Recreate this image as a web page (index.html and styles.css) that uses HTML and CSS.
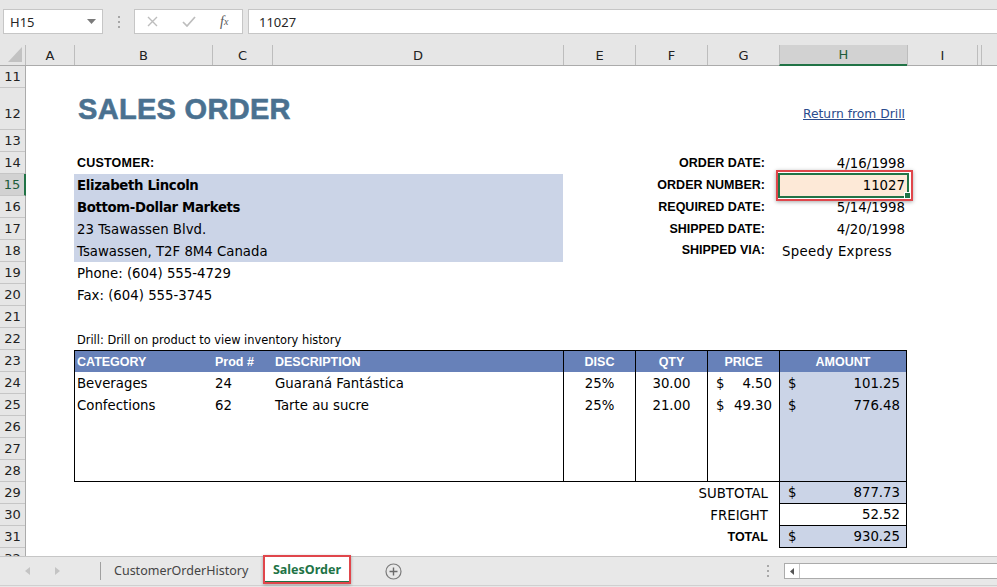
FILE: index.html
```html
<!DOCTYPE html>
<html lang="en">
<head>
<meta charset="utf-8">
<title>SalesOrder</title>
<link rel="stylesheet" href="styles.css">
</head>
<body>
<div class="app">
  <header class="fbar">
    <div class="namebox">
      <span class="ref">H15</span>
      <svg class="dd" width="9" height="5" viewBox="0 0 9 5"><path d="M0 0h9L4.5 5z" fill="#7a7a7a"/></svg>
    </div>
    <div class="grip"><i></i><i></i><i></i></div>
    <div class="fbtns">
      <span class="fbtn"><svg width="11" height="11" viewBox="0 0 11 11"><path d="M1 1l9 9M10 1l-9 9" stroke="#bdbdbd" stroke-width="1.4"/></svg></span>
      <span class="fbtn"><svg width="14" height="11" viewBox="0 0 14 11"><path d="M1 6l4 4 8-9" fill="none" stroke="#bdbdbd" stroke-width="1.7"/></svg></span>
      <span class="fbtn fx">f<sub>x</sub></span>
    </div>
    <div class="finput">11027</div>
  </header>

  <div class="colhdr">
    <div class="corner"><svg width="25" height="20" viewBox="0 0 25 20"><path d="M22 2v15H8z" fill="#c2c2c2"/></svg></div>
    <div class="ch">A</div>
    <div class="ch">B</div>
    <div class="ch">C</div>
    <div class="ch">D</div>
    <div class="ch">E</div>
    <div class="ch">F</div>
    <div class="ch">G</div>
    <div class="ch sel">H</div>
    <div class="ch">I</div>
    <div class="ch"></div>
    <div class="ch"></div>
  </div>

  <div class="body">
    <div class="rowhdr">
      <div class="rh">11</div>
      <div class="rh tall">12</div>
      <div class="rh">13</div>
      <div class="rh">14</div>
      <div class="rh sel">15</div>
      <div class="rh">16</div>
      <div class="rh">17</div>
      <div class="rh">18</div>
      <div class="rh">19</div>
      <div class="rh">20</div>
      <div class="rh">21</div>
      <div class="rh">22</div>
      <div class="rh">23</div>
      <div class="rh">24</div>
      <div class="rh">25</div>
      <div class="rh">26</div>
      <div class="rh">27</div>
      <div class="rh">28</div>
      <div class="rh">29</div>
      <div class="rh">30</div>
      <div class="rh">31</div>
      <div class="rh">32</div>
    </div>

    <div class="grid">
      <h1 class="title">SALES ORDER</h1>
      <a class="drill-link" href="#">Return from Drill</a>

      <div class="label cust-label">CUSTOMER:</div>
      <div class="cust-box">
        <div class="line b">Elizabeth Lincoln</div>
        <div class="line b">Bottom-Dollar Markets</div>
        <div class="line">23 Tsawassen Blvd.</div>
        <div class="line">Tsawassen, T2F 8M4 Canada</div>
      </div>
      <div class="contact">
        <div class="line">Phone: (604) 555-4729</div>
        <div class="line">Fax: (604) 555-3745</div>
      </div>

      <div class="order-info">
        <div class="oi-label">ORDER DATE:</div><div class="oi-val">4/16/1998</div>
        <div class="oi-label">ORDER NUMBER:</div><div class="oi-val active">11027<span class="handle"></span></div>
        <div class="oi-label">REQUIRED DATE:</div><div class="oi-val">5/14/1998</div>
        <div class="oi-label">SHIPPED DATE:</div><div class="oi-val">4/20/1998</div>
        <div class="oi-label via">SHIPPED VIA:</div><div class="oi-val left">Speedy Express</div>
      </div>

      <div class="drill-note">Drill: Drill on product to view inventory history</div>

      <div class="order-table">
        <div class="tcol">
          <div class="th">CATEGORY</div>
          <div class="td">Beverages</div>
          <div class="td">Confections</div>
        </div>
        <div class="tcol">
          <div class="th pad3">Prod #</div>
          <div class="td pad3">24</div>
          <div class="td pad3">62</div>
        </div>
        <div class="tcol">
          <div class="th pad3">DESCRIPTION</div>
          <div class="td pad3">Guaraná Fantástica</div>
          <div class="td pad3">Tarte au sucre</div>
        </div>
        <div class="tcol bl">
          <div class="th c">DISC</div>
          <div class="td c">25%</div>
          <div class="td c">25%</div>
        </div>
        <div class="tcol bl">
          <div class="th c">QTY</div>
          <div class="td c">30.00</div>
          <div class="td c">21.00</div>
        </div>
        <div class="tcol bl">
          <div class="th c">PRICE</div>
          <div class="td acct price"><span>$</span><span>4.50</span></div>
          <div class="td acct price"><span>$</span><span>49.30</span></div>
        </div>
        <div class="tcol bl amount">
          <div class="th c">AMOUNT</div>
          <div class="td acct"><span>$</span><span>101.25</span></div>
          <div class="td acct"><span>$</span><span>776.48</span></div>
        </div>
      </div>

      <div class="sum-label s29">SUBTOTAL</div>
      <div class="sum-label s30">FREIGHT</div>
      <div class="sum-label s31 strong">TOTAL</div>
      <div class="sum-box">
        <div class="money shade"><span>$</span><span>877.73</span></div>
        <div class="money end"><span>52.52</span></div>
        <div class="money shade"><span>$</span><span>930.25</span></div>
      </div>
    </div>
  </div>

  <footer class="tabs">
    <div class="tabnav">
      <svg class="tri" width="5" height="8" viewBox="0 0 5 8"><path d="M5 0v8L0 4z" fill="#c4c4c4"/></svg>
      <svg class="tri" width="5" height="8" viewBox="0 0 5 8"><path d="M0 0v8l5-4z" fill="#c4c4c4"/></svg>
    </div>
    <div class="tabsep"></div>
    <div class="tab">CustomerOrderHistory</div>
    <div class="tab active">SalesOrder</div>
    <div class="addtab"><svg width="17" height="17" viewBox="0 0 17 17"><circle cx="8.5" cy="8.5" r="7.5" fill="none" stroke="#7b7b7b" stroke-width="1.2"/><path d="M8.5 4.5v8M4.5 8.5h8" stroke="#6a6a6a" stroke-width="1.4"/></svg></div>
    <div class="tabspace"></div>
    <div class="vgrip"><i></i><i></i><i></i></div>
    <div class="hscroll">
      <div class="hs-btn"><svg width="4" height="7" viewBox="0 0 4 7"><path d="M4 0v7L0 3.5z" fill="#555"/></svg></div>
    </div>
  </footer>
</div>
</body>
</html>
```

FILE: styles.css
```css
* { box-sizing: border-box; margin: 0; padding: 0; }
html, body { width: 997px; height: 587px; overflow: hidden; }
body { background: #e8e8e8; font-family: "DejaVu Sans", sans-serif; color: #000; }
.app { display: flex; flex-direction: column; height: 587px; }

/* formula bar */
.fbar { flex: none; height: 45px; background: #e6e6e6; display: flex; align-items: flex-start; padding-top: 9px; font-family: "Noto Sans", sans-serif; font-size: 13px; color: #262626; }
.namebox { margin-left: 3px; width: 100px; height: 25px; background: #fff; border: 1px solid #c6c6c6; display: flex; align-items: center; justify-content: space-between; padding: 0 6px 0 6px; }
.grip { width: 31px; height: 25px; display: flex; flex-direction: column; align-items: center; justify-content: center; gap: 3px; }
.grip i { width: 2px; height: 2px; background: #a6a6a6; }
.fbtns { width: 109px; height: 25px; background: #fff; border: 1px solid #c6c6c6; display: flex; align-items: center; }
.fbtn { width: 36px; display: flex; justify-content: center; align-items: center; }
.fx { font-family: "Liberation Serif", serif; font-style: italic; font-size: 14px; color: #595959; }
.fx sub { font-size: 10px; vertical-align: -1px; }
.finput { flex: 1; margin-left: 5px; height: 25px; background: #fff; border: 1px solid #c6c6c6; border-right: 0; display: flex; align-items: center; padding-left: 10px; }

/* column headers */
.colhdr { flex: none; height: 21px; display: grid; grid-template-columns: 25px 49px 138px 60px 291px 72px 72px 72px 128px 70px 4px 1fr; background: #e6e6e6; border-bottom: 1px solid #ababab; font-size: 13px; color: #222; }
.corner { display: flex; }
.ch { border-left: 1px solid #bdbdbd; display: flex; align-items: center; justify-content: center; }
.ch.sel { background: #d2d2d2; border-bottom: 2px solid #217346; margin-bottom: -1px; color: #1e5c3a; }

/* body */
.body { flex: none; height: 490px; display: flex; overflow: hidden; background: #fff; }
.rowhdr { flex: none; width: 26px; background: #e6e6e6; border-right: 1px solid #ababab; font-size: 13px; color: #222; }
.rh { height: 22px; border-bottom: 1px solid #c6c6c6; display: flex; align-items: center; justify-content: center; }
.rh.tall { height: 42px; align-items: flex-end; padding-bottom: 8px; }
.rh.sel { background: #d2d2d2; color: #1e5c3a; border-right: 2px solid #217346; margin-right: -1px; }

.grid { flex: 1; display: grid; grid-template-columns: [A] 48px [B] 138px [C] 60px [D] 291px [E] 72px [F] 72px [G] 72px [H] 128px [I] 70px [J] 4px [K] 1fr; grid-template-rows: 22px 42px repeat(20, 22px); align-content: start; font-size: 13.3px; }

.title { grid-column: B / F; grid-row: 2; font: bold 29px/42px "Liberation Sans", sans-serif; color: #4a7190; padding-left: 4px; letter-spacing: 0.3px; -webkit-text-stroke: 0.6px #4a7190; white-space: nowrap; }
.drill-link { grid-column: H; grid-row: 2; align-self: end; justify-self: end; margin: 0 2px 9px 0; font-size: 12.3px; color: #2a4b8d; text-decoration: underline; white-space: nowrap; }

.label, .oi-label, .th, .strong { font-family: "Liberation Sans", sans-serif; font-weight: bold; font-size: 12.5px; }
.label { display: flex; align-items: center; padding-left: 3px; }
.cust-label { grid-column: B / D; grid-row: 4; letter-spacing: 0.2px; }
.cust-box { grid-column: B / E; grid-row: 5 / span 4; background: #cbd4e7; }
.contact { grid-column: B / E; grid-row: 9 / span 2; }
.line { height: 22px; display: flex; align-items: center; padding-left: 3px; white-space: nowrap; }
.b { font-weight: bold; letter-spacing: -0.35px; }

.order-info { grid-column: E / I; grid-row: 4 / span 5; display: grid; grid-template-columns: 216px 128px; grid-auto-rows: 22px; }
.oi-label { display: flex; justify-content: flex-end; align-items: center; padding-right: 14px; white-space: nowrap; }
.oi-label.via { padding-bottom: 3px; }
.oi-val { display: flex; justify-content: flex-end; align-items: center; padding-right: 2px; white-space: nowrap; }
.oi-val.left { justify-content: flex-start; padding-left: 3px; letter-spacing: 0.3px; }
.oi-val.active { background: #fde9d7; position: relative; }
.oi-val.active::before { content: ""; position: absolute; top: -1px; left: -1px; right: -2px; bottom: -2px; border: 2px solid #217346; }
.oi-val.active::after { content: ""; position: absolute; top: -4px; left: -3px; right: -6px; bottom: -5px; border: 2px solid #e0464b; box-shadow: 0 1px 4px rgba(0,0,0,0.35); }
.handle { position: absolute; right: -3px; bottom: -2px; width: 5px; height: 5px; background: #217346; box-shadow: 0 0 0 1px #fff; }

.drill-note { grid-column: B / F; grid-row: 12; font-size: 11.4px; display: flex; align-items: center; padding: 2px 0 0 3px; white-space: nowrap; }

.order-table { grid-column: B / I; grid-row: 13 / span 6; border: 1px solid #000; display: grid; grid-template-columns: 137px 60px 291px 72px 72px 72px 127px; }
.tcol { display: flex; flex-direction: column; }
.tcol.bl { border-left: 1px solid #000; }
.tcol.amount { background: #cbd4e7; }
.th { height: 21px; background: #6781b9; color: #fff; display: flex; align-items: center; padding-left: 2px; white-space: nowrap; }
.td { height: 22px; display: flex; align-items: center; padding-left: 2px; white-space: nowrap; }
.pad3 { padding-left: 3px; }
.th.c, .td.c { justify-content: center; padding-left: 0; }
.td.acct { justify-content: space-between; padding: 0 6px 0 8px; }
.td.acct.price { padding: 0 7px 0 8px; }

.sum-label { grid-column: G; display: flex; justify-content: flex-end; align-items: center; padding-right: 11px; white-space: nowrap; }
.s29 { grid-row: 19; }
.s30 { grid-row: 20; }
.s31 { grid-row: 21; }
.sum-box { grid-column: H; grid-row: 19 / span 3; border: 1px solid #000; border-top: 0; }
.money { height: 22px; display: flex; justify-content: space-between; align-items: center; padding: 0 6px 0 8px; border-bottom: 1px solid #000; }
.money:last-child { height: 21px; border-bottom: 0; }
.money.end { justify-content: flex-end; }
.money.shade { background: #cbd4e7; }

/* sheet tabs */
.tabs { flex: none; height: 30px; display: flex; align-items: center; background: #e8e8e8; border-top: 1px solid #c6c6c6; border-bottom: 1px solid #d0d0d0; font-family: "Noto Sans", sans-serif; font-size: 12.5px; color: #444; }
.tabnav { width: 100px; display: flex; align-items: center; padding-left: 25px; gap: 25px; }
.tabsep { width: 1px; height: 18px; background: #a0a0a0; }
.tab { width: 164px; padding-left: 13px; padding-bottom: 1px; white-space: nowrap; }
.tab.active { width: 84px; padding: 0; align-self: flex-start; height: 26px; background: #fff; border-bottom: 2px solid #217346; color: #217346; font-weight: bold; display: flex; align-items: center; justify-content: center; position: relative; }
.tab.active::after { content: ""; position: absolute; top: -2px; left: -2px; right: -2px; bottom: -3px; border: 2px solid #e0464b; box-shadow: 0 1px 3px rgba(0,0,0,0.3); }
.addtab { width: 88px; display: flex; justify-content: center; align-items: center; }
.tabspace { flex: 1; }
.vgrip { width: 12px; display: flex; flex-direction: column; align-items: center; gap: 3px; }
.vgrip i { width: 2px; height: 2px; background: #a8a8a8; }
.hscroll { margin-left: 10px; width: 213px; height: 16px; background: #fff; border: 1px solid #ababab; border-right: 0; display: flex; }
.hs-btn { width: 15px; border-right: 1px solid #c6c6c6; display: flex; align-items: center; justify-content: center; }
```
